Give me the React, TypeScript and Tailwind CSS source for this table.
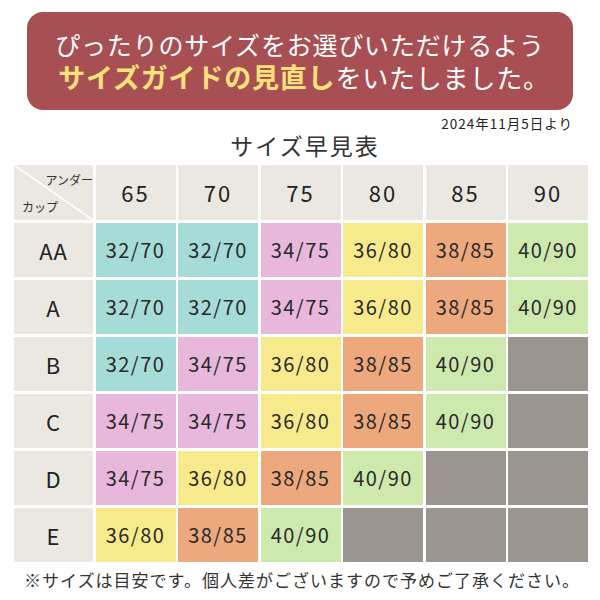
const JP = { fontFamily: '"Noto Sans CJK JP", "Noto Sans", sans-serif' };

type Cell = { t: string; c: string } | null;

const T = "bg-[#a6dcd7]";
const P = "bg-[#e8b7dc]";
const Y = "bg-[#f7ea8d]";
const O = "bg-[#eda87d]";
const G = "bg-[#cde9ae]";

const heads = ["65", "70", "75", "80", "85", "90"];

const rows: { cup: string; cells: Cell[] }[] = [
  { cup: "AA", cells: [{ t: "32/70", c: T }, { t: "32/70", c: T }, { t: "34/75", c: P }, { t: "36/80", c: Y }, { t: "38/85", c: O }, { t: "40/90", c: G }] },
  { cup: "A", cells: [{ t: "32/70", c: T }, { t: "32/70", c: T }, { t: "34/75", c: P }, { t: "36/80", c: Y }, { t: "38/85", c: O }, { t: "40/90", c: G }] },
  { cup: "B", cells: [{ t: "32/70", c: T }, { t: "34/75", c: P }, { t: "36/80", c: Y }, { t: "38/85", c: O }, { t: "40/90", c: G }, null] },
  { cup: "C", cells: [{ t: "34/75", c: P }, { t: "34/75", c: P }, { t: "36/80", c: Y }, { t: "38/85", c: O }, { t: "40/90", c: G }, null] },
  { cup: "D", cells: [{ t: "34/75", c: P }, { t: "36/80", c: Y }, { t: "38/85", c: O }, { t: "40/90", c: G }, null, null] },
  { cup: "E", cells: [{ t: "36/80", c: Y }, { t: "38/85", c: O }, { t: "40/90", c: G }, null, null, null] },
];

export default function App() {
  return (
    <div className="w-[600px] h-[600px] bg-white overflow-hidden text-[#333]" style={JP}>
      <div className="pt-[12px] px-[27px]">
        <div className="h-[98px] rounded-[16px] bg-[#a84f53] flex flex-col items-center justify-center gap-[3px]">
          <div className="text-white text-[25px] leading-[30px] tracking-[0.8px] -mt-[2px]">
            ぴったりのサイズをお選びいただけるよう
          </div>
          <div className="flex items-baseline text-white text-[26px] leading-[30px] tracking-[0.8px] pl-[8px]">
            <span className="text-[#fbe27c] font-bold text-[27px] leading-[30px] tracking-[0.8px]">サイズガイドの見直し</span>
            <span>をいたしました。</span>
          </div>
        </div>
      </div>
      <div className="text-right pr-[27px] text-[13.5px] leading-[16px] mt-[5px] tracking-[1px] text-[#222]">
        2024年11月5日より
      </div>
      <div className="text-center pl-[10px] text-[23px] leading-[28px] tracking-[2px] text-[#333]">
        サイズ早見表
      </div>
      <div className="ml-[14px] mt-[6px] w-[576px] grid grid-cols-[79px_repeat(6,80px)] gap-x-[2.5px] gap-y-[3px]">
        <div className="relative h-[55px] bg-[#ebe7e1] overflow-hidden">
          <svg className="absolute inset-0" width="79" height="55">
            <line x1="0" y1="0" x2="79" y2="55" stroke="white" strokeWidth="1.5" />
          </svg>
          <span className="absolute right-[0px] top-[8px] text-[12px] leading-[14px]">アンダー</span>
          <span className="absolute left-[8px] bottom-[6px] text-[12px] leading-[14px]">カップ</span>
        </div>
        {heads.map((h) => (
          <div key={h} className="h-[55px] bg-[#ebe7e1] flex items-center justify-center text-[22px] tracking-[2px] text-[#222]">
            {h}
          </div>
        ))}
        {rows.map((r) => (
          <>
            <div key={r.cup} className="h-[54px] bg-[#ebe7e1] flex items-center justify-center text-[22px] tracking-[1px] text-[#222]">
              {r.cup}
            </div>
            {r.cells.map((c, i) =>
              c ? (
                <div key={r.cup + i} className={`h-[54px] ${c.c} flex items-center justify-center text-[20px] tracking-[1.5px] text-[#2a2a2a]`}>
                  {c.t}
                </div>
              ) : (
                <div key={r.cup + i} className="h-[54px] bg-[#9b9590]" />
              )
            )}
          </>
        ))}
      </div>
      <div className="text-center pl-[4px] text-[17px] leading-[24px] mt-[6px] tracking-[1px] text-[#333]">
        ※サイズは目安です。個人差がございますので予めご了承ください。
      </div>
    </div>
  );
}
